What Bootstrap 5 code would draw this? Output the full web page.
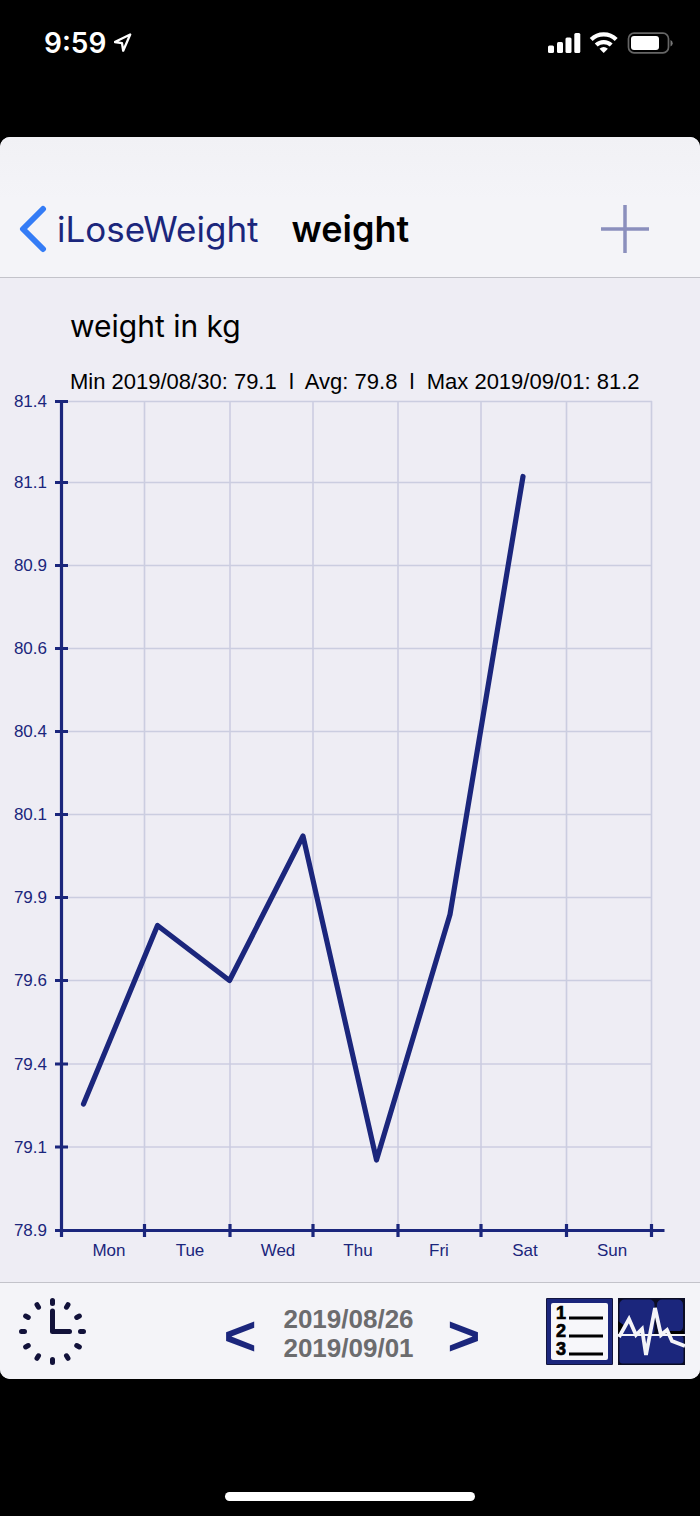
<!DOCTYPE html>
<html lang="en">
<head>
<meta charset="utf-8">
<meta name="viewport" content="width=device-width, initial-scale=1">
<title>iLoseWeight – weight</title>
<link href="https://cdn.jsdelivr.net/npm/bootstrap@5.3.0/dist/css/bootstrap.min.css" rel="stylesheet">
<style>
  :root { --navy: #1b267c; --bar: #f4f4f8; --sheet: #eeedf4; --rule: #c3c3ca; }
  body { background: #000; font-family: Inter, "Liberation Sans", sans-serif; }
  svg { display: block; }
  .status-bar { height: 137px; padding: 22px 27px 0 44px; }
  .status-time { font-size: 28px; line-height: 42px; font-weight: 600; }
  .status-icons { height: 42px; }
  .app-sheet { background: var(--sheet); border-radius: 10px; }
  .title-bar { background: linear-gradient(#f1f1f5, var(--bar) 45%); border-bottom: 1px solid var(--rule); padding: 68px 51px 24px 19px; }
  .title-bar a { color: var(--navy); font-size: 35px; line-height: 48px; gap: 10px; }
  .title-bar h1 { font-size: 36px; line-height: 48px; font-weight: 600; color: #000; margin-left: 33px; }
  .chart-head { padding: 28px 0 0 70px; color: #000; }
  .chart-head h2 { font-size: 30px; line-height: 40px; font-weight: 400; margin-bottom: 27px; }
  .chart-head p { font: 22px/18px "Liberation Sans", Arial, sans-serif; white-space: pre-wrap; }
  .weight-chart { font: 17px "Liberation Sans", Arial, sans-serif; }
  .tool-bar { background: var(--bar); border-top: 1px solid var(--rule); padding: 15px 15px 14px 19px; }
  .side { flex: 1 1 0; }
  .period-nav { padding-top: 4px; gap: 27px; }
  .period { font: bold 26px/29px "Liberation Sans", Arial, sans-serif; color: #6c6c6e; margin-right: 7px; }
  .period-nav .step-btn { font: bold 56px/59px "Liberation Sans", Arial, sans-serif; color: var(--navy); padding: 4px 0 0; }
  .view-btns { gap: 5px; }
  .home-bar { width: 250px; height: 9px; background: #fff; margin-bottom: 15px; }
</style>
</head>
<body class="min-vh-100 d-flex flex-column">
<header class="status-bar d-flex align-items-start justify-content-between text-white">
  <div class="d-flex align-items-center">
    <span class="status-time">9:59</span>
    <svg class="ms-2" width="19" height="20" viewBox="0 0 19 20" fill="none" stroke="#fff" stroke-width="2.300" stroke-linejoin="round" aria-hidden="true"><path d="M16.200 1.500 0.800 9 8 10.200l1.200 7.500z"/></svg>
  </div>
  <div class="status-icons d-flex align-items-center">
    <svg width="125" height="22" viewBox="0 0 125 22" role="img" aria-label="Signal, Wi-Fi, battery">
      <g fill="#fff">
        <rect x="0" y="13.500" width="6" height="7.500" rx="1.500"/><rect x="9" y="10" width="6" height="11" rx="1.500"/><rect x="17.500" y="5.500" width="6" height="15.500" rx="1.500"/><rect x="26.300" y="1" width="6" height="20" rx="1.500"/>
        <path d="M55.700 21 51.500 16.800a6.500 6.500 0 0 1 8.400 0z"/>
      </g>
      <g fill="none" stroke="#fff" stroke-width="4.200"><path d="M43.200 7.500a18 18 0 0 1 25 0"/><path d="M48.200 13a11 11 0 0 1 15 0"/></g>
      <rect x="80.500" y="1.200" width="40" height="19.600" rx="5.500" fill="none" stroke="#666" stroke-width="1.700"/>
      <rect x="83" y="4" width="28" height="14" rx="3" fill="#fff"/>
      <path d="M122.500 8v6.500q2.200-1 2.200-3.300t-2.200-3.200z" fill="#777"/>
    </svg>
  </div>
</header>

<main class="app-sheet overflow-hidden">
  <nav class="title-bar d-flex align-items-center">
    <a href="#" class="d-flex align-items-center text-decoration-none">
      <svg width="28" height="48" viewBox="0 0 28 48" fill="none" stroke="#347cf6" stroke-width="6" stroke-linecap="round" stroke-linejoin="round" aria-hidden="true"><path d="M24 4 4 24l20 20"/></svg>
      iLoseWeight
    </a>
    <h1 class="mb-0">weight</h1>
    <button type="button" class="btn border-0 p-0 ms-auto" aria-label="Add entry">
      <svg width="48" height="48" viewBox="0 0 48 48" stroke="#8b8fbd" stroke-width="3.500"><path d="M0 24h48M24 0v48"/></svg>
    </button>
  </nav>

  <section>
    <div class="chart-head">
      <h2>weight in kg</h2>
      <p class="mb-0">Min 2019/08/30: 79.1  l  Avg: 79.8  l  Max 2019/09/01: 81.2</p>
    </div>
    <svg class="weight-chart w-100" viewBox="0 391 700 891" role="img" aria-label="Weight per day">
      <path stroke="#1b267c" stroke-opacity=".16" stroke-width="1.600" fill="none" d="M62 401.500H652M62 482.500H652M62 565.500H652M62 648.500H652M62 731.500H652M62 814.500H652M62 897.500H652M62 980.500H652M62 1064H652M62 1147H652M144.500 401V1230M230 401V1230M313 401V1230M398 401V1230M481 401V1230M566.500 401V1230M651.500 401V1230"/>
      <path stroke="#1b267c" stroke-width="3.200" fill="none" d="M61.500 403V1237M55 1230.500H664.500M55 401.500H68M55 482.500H68M55 565.500H68M55 648.500H68M55 731.500H68M55 814.500H68M55 897.500H68M55 980.500H68M55 1064H68M55 1147H68M144.500 1224V1237M230 1224V1237M313 1224V1237M398 1224V1237M481 1224V1237M566.500 1224V1237M651.500 1224V1237"/>
      <path stroke="#1b267c" stroke-width="5.200" stroke-linecap="round" stroke-linejoin="round" fill="none" d="M83.500 1104 157.500 925.500 229.500 980.500 303 836 376.500 1160 450 914.500 523 476.500"/>
      <g fill="#1b267c" text-anchor="end">
        <text x="47" y="407">81.4</text><text x="47" y="488">81.1</text><text x="47" y="571">80.9</text><text x="47" y="654">80.6</text><text x="47" y="737">80.4</text><text x="47" y="820">80.1</text><text x="47" y="903">79.9</text><text x="47" y="986">79.6</text><text x="47" y="1070">79.4</text><text x="47" y="1153">79.1</text><text x="47" y="1236">78.9</text>
      </g>
      <g fill="#1b267c" text-anchor="middle">
        <text x="109" y="1256">Mon</text><text x="190" y="1256">Tue</text><text x="278" y="1256">Wed</text><text x="358" y="1256">Thu</text><text x="439" y="1256">Fri</text><text x="525" y="1256">Sat</text><text x="612" y="1256">Sun</text>
      </g>
    </svg>
  </section>

  <footer class="tool-bar d-flex align-items-center">
    <div class="side">
      <button type="button" class="btn border-0 p-0 d-block" aria-label="Time">
        <svg width="67" height="67" viewBox="-33.500 -33.500 67 67" fill="none" stroke="#12123a" stroke-width="5" stroke-linecap="round" stroke-linejoin="round">
          <path d="M0-20.500V0H17"/>
          <path d="M0-31v3M0 28v3M-31 0h3M28 0h3M-15.500-26.850l1.500 2.600M15.500-26.850l-1.500 2.600M-15.500 26.850l1.500-2.600M15.500 26.850l-1.500-2.600M-26.850-15.500l2.600 1.500M26.850-15.500l-2.600 1.500M-26.850 15.500l2.600-1.500M26.850 15.500l-2.600-1.500"/>
        </svg>
      </button>
    </div>
    <div class="period-nav d-flex align-items-center">
      <button type="button" class="btn border-0 step-btn" aria-label="Previous week">&lt;</button>
      <div class="period">2019/08/26<br>2019/09/01</div>
      <button type="button" class="btn border-0 step-btn" aria-label="Next week">&gt;</button>
    </div>
    <div class="side view-btns d-flex justify-content-end">
      <button type="button" class="btn border-0 p-0" aria-label="List view">
        <svg width="67" height="67" viewBox="0 0 67 67">
          <rect width="67" height="67" rx="1" fill="#12153f"/><rect x="1" y="1" width="65" height="65" fill="#1b267c"/><rect x="5" y="5" width="57" height="57" rx="2" fill="#f7f7fa"/>
          <path d="M23 20H57M23 38H57M23 56H57" stroke="#000" stroke-width="3"/>
          <g font-family="Liberation Sans, sans-serif" font-weight="700" font-size="18" text-anchor="middle" stroke="#000" stroke-width=".7"><text x="15" y="21">1</text><text x="15" y="39">2</text><text x="15" y="57">3</text></g>
        </svg>
      </button>
      <button type="button" class="btn border-0 p-0" aria-label="Chart view">
        <svg width="67" height="67" viewBox="0 0 67 67">
          <rect width="67" height="67" fill="#0a0c24"/>
          <rect x="1.500" y="1.500" width="35" height="36" rx="5" fill="#1b267c"/><rect x="39" y="1.500" width="26" height="32" rx="5" fill="#1b267c"/><rect x="1.500" y="38" width="64" height="27.500" rx="3" fill="#1b267c"/>
          <path d="M0 23 7 28 2 37H0zM50 33h16v4H50z" fill="#000"/>
          <path d="M0 37H67" stroke="#f4f4f8" stroke-width="1.800"/>
          <path d="M1 39 11 21 18 37 24 31 28 57 37 10 43 37 49 32 54 43 67 48" fill="none" stroke="#f4f4f8" stroke-width="3.800"/>
        </svg>
      </button>
    </div>
  </footer>
</main>

<div class="home-bar rounded-pill mt-auto mx-auto"></div>
<script src="https://cdn.jsdelivr.net/npm/bootstrap@5.3.0/dist/js/bootstrap.bundle.min.js"></script>
</body>
</html>
